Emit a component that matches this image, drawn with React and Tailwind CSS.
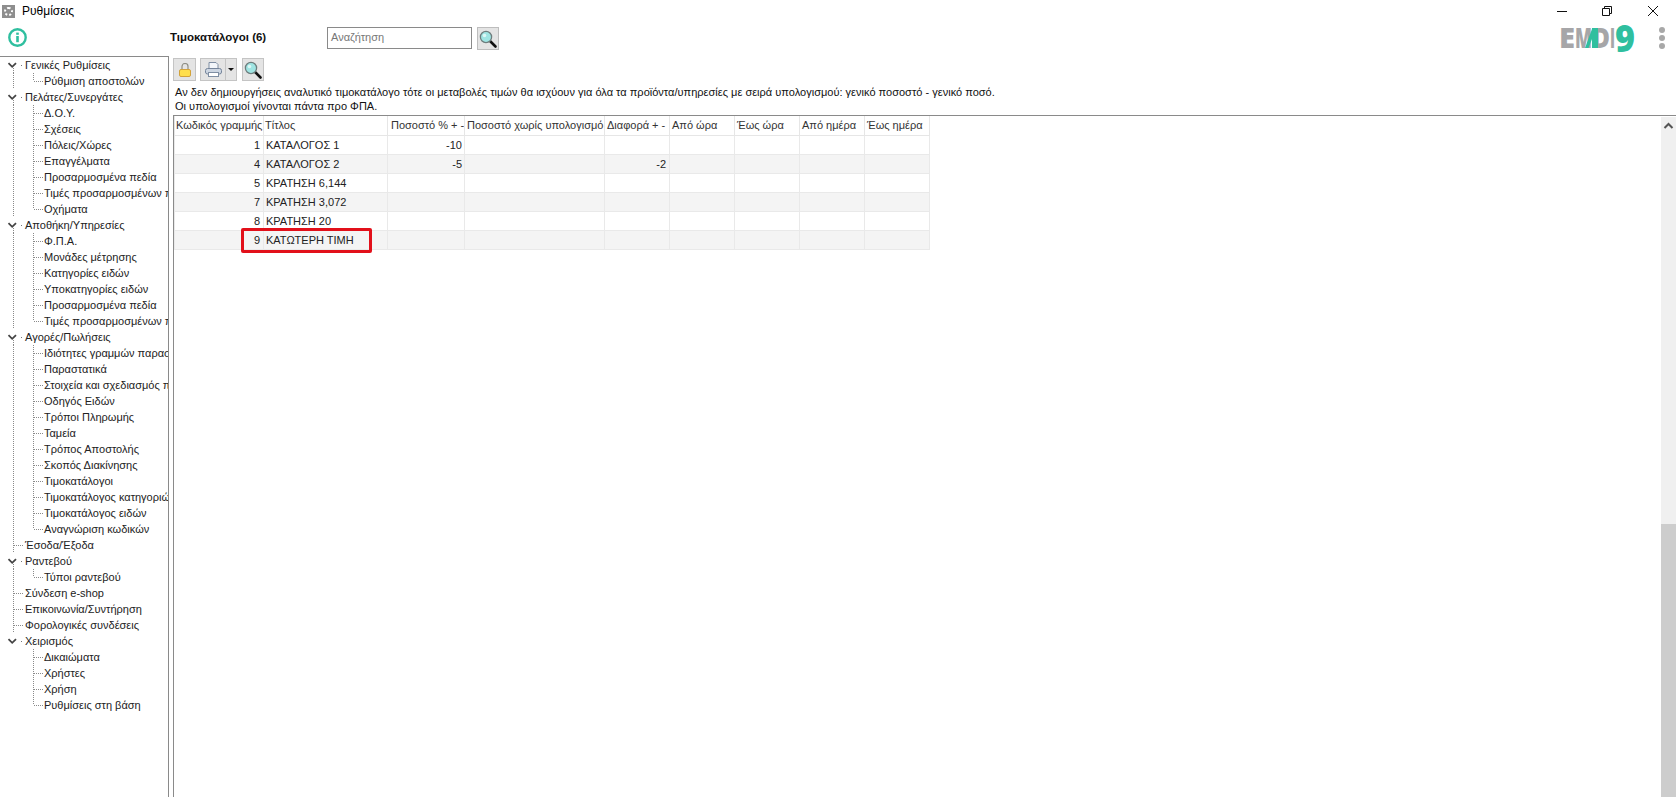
// App.jsx
const TREE = [
  { t: 'Γενικές Ρυθμίσεις', k: 'parent' },
  { t: 'Ρύθμιση αποστολών', k: 'child', last: true },
  { t: 'Πελάτες/Συνεργάτες', k: 'parent' },
  { t: 'Δ.Ο.Υ.', k: 'child' },
  { t: 'Σχέσεις', k: 'child' },
  { t: 'Πόλεις/Χώρες', k: 'child' },
  { t: 'Επαγγέλματα', k: 'child' },
  { t: 'Προσαρμοσμένα πεδία', k: 'child' },
  { t: 'Τιμές προσαρμοσμένων πεδίων', k: 'child' },
  { t: 'Οχήματα', k: 'child', last: true },
  { t: 'Αποθήκη/Υπηρεσίες', k: 'parent' },
  { t: 'Φ.Π.Α.', k: 'child' },
  { t: 'Μονάδες μέτρησης', k: 'child' },
  { t: 'Κατηγορίες ειδών', k: 'child' },
  { t: 'Υποκατηγορίες ειδών', k: 'child' },
  { t: 'Προσαρμοσμένα πεδία', k: 'child' },
  { t: 'Τιμές προσαρμοσμένων πεδίων', k: 'child', last: true },
  { t: 'Αγορές/Πωλήσεις', k: 'parent' },
  { t: 'Ιδιότητες γραμμών παραστατικών', k: 'child' },
  { t: 'Παραστατικά', k: 'child' },
  { t: 'Στοιχεία και σχεδιασμός παραστατικών', k: 'child' },
  { t: 'Οδηγός Ειδών', k: 'child' },
  { t: 'Τρόποι Πληρωμής', k: 'child' },
  { t: 'Ταμεία', k: 'child' },
  { t: 'Τρόπος Αποστολής', k: 'child' },
  { t: 'Σκοπός Διακίνησης', k: 'child' },
  { t: 'Τιμοκατάλογοι', k: 'child' },
  { t: 'Τιμοκατάλογος κατηγοριών', k: 'child' },
  { t: 'Τιμοκατάλογος ειδών', k: 'child' },
  { t: 'Αναγνώριση κωδικών', k: 'child', last: true },
  { t: 'Έσοδα/Έξοδα', k: 'leaf' },
  { t: 'Ραντεβού', k: 'parent' },
  { t: 'Τύποι ραντεβού', k: 'child', last: true },
  { t: 'Σύνδεση e-shop', k: 'leaf' },
  { t: 'Επικοινωνία/Συντήρηση', k: 'leaf' },
  { t: 'Φορολογικές συνδέσεις', k: 'leaf' },
  { t: 'Χειρισμός', k: 'parent', end: true },
  { t: 'Δικαιώματα', k: 'child', noRoot: true },
  { t: 'Χρήστες', k: 'child', noRoot: true },
  { t: 'Χρήση', k: 'child', noRoot: true },
  { t: 'Ρυθμίσεις στη βάση', k: 'child', last: true, noRoot: true },
];

const COLS = [
  { t: 'Κωδικός γραμμής', c: 'w-[89px] pl-px' },
  { t: 'Τίτλος', c: 'w-[124px] pl-px' },
  { t: 'Ποσοστό % + -', c: 'w-[77px] pl-[3px]' },
  { t: 'Ποσοστό χωρίς υπολογισμό', c: 'w-[140px] pl-[2px]' },
  { t: 'Διαφορά + -', c: 'w-[65px] pl-[2px]' },
  { t: 'Από ώρα', c: 'w-[65px] pl-[2px]' },
  { t: 'Έως ώρα', c: 'w-[65px] pl-[2px]' },
  { t: 'Από ημέρα', c: 'w-[65px] pl-[2px]' },
  { t: 'Έως ημέρα', c: 'w-[65px] pl-[2px]' },
];

const ROWS = [
  [1, 'ΚΑΤΑΛΟΓΟΣ 1', '-10', ''],
  [4, 'ΚΑΤΑΛΟΓΟΣ 2', '-5', '-2'],
  [5, 'ΚΡΑΤΗΣΗ 6,144', '', ''],
  [7, 'ΚΡΑΤΗΣΗ 3,072', '', ''],
  [8, 'ΚΡΑΤΗΣΗ 20', '', ''],
  [9, 'ΚΑΤΩΤΕΡΗ ΤΙΜΗ', '', ''],
];

function TreeGuide({ k, last, noRoot, end }) {
  const dots = { stroke: '#8a8a8a', strokeWidth: 1, strokeDasharray: '1 1' };
  return (
    <svg width="44" height="16" className="shrink-0">
      {k === 'parent' && (
        <>
          {!end && <line x1="13.5" y1="11" x2="13.5" y2="16" {...dots} />}
          <path d="M8.5 6.2 L12.2 9.8 L16 6.2" fill="none" stroke="#444" strokeWidth="1.8" />
          <rect x="21" y="8" width="1" height="1" fill="#777" />
        </>
      )}
      {k === 'leaf' && (
        <>
          <line x1="13.5" y1="0" x2="13.5" y2="16" {...dots} />
          <line x1="14" y1="8.5" x2="24" y2="8.5" {...dots} />
        </>
      )}
      {k === 'child' && (
        <>
          {!noRoot && <line x1="13.5" y1="0" x2="13.5" y2="16" {...dots} />}
          <line x1="33.5" y1="0" x2="33.5" y2={last ? 8 : 16} {...dots} />
          <line x1="34" y1="8.5" x2="43" y2="8.5" {...dots} />
        </>
      )}
    </svg>
  );
}

function Magnifier() {
  return (
    <svg width="20" height="20" viewBox="0 0 20 20">
      <path d="M11.5 11.5 L17.5 17.5" stroke="#111" strokeWidth="2.6" strokeLinecap="round" />
      <circle cx="8" cy="8" r="5.6" fill="#9fe5e3" stroke="#6d7d7d" strokeWidth="1.3" />
      <circle cx="6.5" cy="6.5" r="1.8" fill="#dcf7f6" />
    </svg>
  );
}

function Lock() {
  return (
    <svg width="12" height="14" viewBox="0 0 12 14">
      <path d="M3 7 V3.5 a3 3 0 0 1 6 0 V7" fill="none" stroke="#8f8f86" strokeWidth="1.2" />
      <rect x="0.5" y="6.5" width="11" height="7" rx="1.5" fill="#ffdf4d" stroke="#d2a23a" />
    </svg>
  );
}

function Printer() {
  return (
    <svg width="17" height="15" viewBox="0 0 17 15">
      <path d="M4 7 V0.5 H11 L13 2.5 V7" fill="#f3f6fa" stroke="#7f8ea3" />
      <rect x="0.5" y="6.5" width="16" height="5.5" rx="2" fill="#cdd6e2" stroke="#75849a" />
      <rect x="3.5" y="10.5" width="10" height="4" fill="#fff" stroke="#7f8ea3" />
    </svg>
  );
}

function Logo() {
  const type = { fontFamily: "'Open Sans', sans-serif", fontWeight: 800, lengthAdjust: 'spacingAndGlyphs' };
  return (
    <svg width="76" height="28" viewBox="0 0 76 28" className="-mt-[2px] shrink-0">
      <text x="0" y="23" fontSize="28" fill="#a6a6a8" textLength="16" {...type}>E</text>
      <text x="16" y="23" fontSize="28" fill="#a6a6a8" textLength="17" {...type}>M</text>
      <text x="33" y="23" fontSize="28" fill="#a6a6a8" textLength="18" {...type}>D</text>
      <text x="51" y="23" fontSize="28" fill="#a6a6a8" textLength="5" {...type}>I</text>
      <rect x="33" y="3" width="6" height="20" fill="#2fbf9f" />
      <path d="M26 23 L33 4 V14 L29.5 23 Z" fill="#2fbf9f" />
      <text x="56" y="27" fontSize="37" fill="#2fbf9f" textLength="20" {...type}>9</text>
    </svg>
  );
}

export default function App() {
  return (
    <div className="flex h-screen w-full flex-col overflow-hidden bg-white text-[11px] leading-none text-[#222] [font-family:'Liberation_Sans',Arial,sans-serif]">
      {/* Title bar */}
      <div className="flex h-[27px] shrink-0 items-center pb-[5px]">
        <div className="ml-[2px] flex h-[13px] w-[13px] items-center justify-center bg-[#8e8e8e]">
          <div className="h-[9px] w-[9px] rounded-full border-2 border-dotted border-white" />
        </div>
        <span className="ml-[7px] text-[12px] text-black">Ρυθμίσεις</span>
        <div className="ml-auto flex items-center">
          <svg width="10" height="10" viewBox="0 0 10 10" className="mr-[35px]">
            <line x1="0" y1="5.5" x2="10" y2="5.5" stroke="#111" />
          </svg>
          <svg width="10" height="10" viewBox="0 0 10 10" className="mr-[36px]">
            <path d="M0.5 2.5 H7.5 V9.5 H0.5 Z M2.5 2.5 V0.5 H9.5 V7.5 H7.5" fill="none" stroke="#111" />
          </svg>
          <svg width="10" height="10" viewBox="0 0 10 10" className="mr-[18px]">
            <path d="M0 0 L10 10 M10 0 L0 10" stroke="#111" />
          </svg>
        </div>
      </div>

      <div className="flex min-h-0 flex-1">
        {/* Left column */}
        <div className="flex w-[169px] shrink-0 flex-col">
          <div className="flex h-[29px] shrink-0 items-start pl-[8px] pt-[1px]">
            <svg width="19" height="19" viewBox="0 0 19 19">
              <circle cx="9.5" cy="9.5" r="8.2" fill="none" stroke="#2fbf9f" strokeWidth="2.4" />
              <rect x="8.2" y="8" width="2.6" height="6.2" fill="#2fbf9f" />
              <rect x="8.2" y="4.6" width="2.6" height="2.2" fill="#2fbf9f" />
            </svg>
          </div>
          <div className="min-h-0 flex-1 overflow-hidden border-t border-r border-[#8a8a8a]">
            {TREE.map((n, i) => (
              <div key={i} className="flex h-4 items-center">
                <TreeGuide {...n} />
                <span className={`${n.k === 'child' ? '' : '-ml-[19px]'} whitespace-nowrap`}>{n.t}</span>
              </div>
            ))}
          </div>
        </div>

        {/* Right column */}
        <div className="flex min-w-0 flex-1 flex-col">
          <div className="flex h-[31px] shrink-0 items-start pl-[1px]">
            <span className="mt-[5px] w-[157px] text-[11.5px] font-bold text-[#111]">Τιμοκατάλογοι (6)</span>
            <div className="flex h-[22px] w-[145px] items-center border border-[#8a8a8a] pb-px pl-[3px] text-[#777]">Αναζήτηση</div>
            <div className="ml-[5px] flex h-[23px] w-[22px] items-center justify-center border border-[#bdbdbd] bg-[#e4e4e4]">
              <Magnifier />
            </div>
            <div className="ml-auto">
              <Logo />
            </div>
            <div className="ml-[24px] mr-[11px] flex flex-col gap-[2px]">
              <div className="h-[6px] w-[6px] rounded-full bg-[#a8a8a8]" />
              <div className="h-[6px] w-[6px] rounded-full bg-[#a8a8a8]" />
              <div className="h-[6px] w-[6px] rounded-full bg-[#a8a8a8]" />
            </div>
          </div>

          <div className="flex h-[23px] shrink-0 items-stretch gap-[5px] pl-[4px]">
            <div className="flex w-[23px] items-center justify-center border border-[#c4c4c4] bg-[#e4e4e4]">
              <Lock />
            </div>
            <div className="-ml-px flex w-[37px] items-stretch border border-[#c4c4c4] bg-[#e4e4e4]">
              <div className="flex w-[25px] items-center justify-center border-r border-[#c4c4c4]">
                <Printer />
              </div>
              <div className="flex flex-1 items-center justify-center">
                <div className="h-0 w-0 border-x-[3px] border-t-[3px] border-x-transparent border-t-[#111]" />
              </div>
            </div>
            <div className="flex w-[22px] items-center justify-center border border-[#c4c4c4] bg-[#e4e4e4]">
              <Magnifier />
            </div>
          </div>

          <div className="flex h-[34px] shrink-0 flex-col justify-end gap-[3px] pb-[3px] pl-[6px] text-[11px] tracking-[0.015px] text-[#111]">
            <p className="leading-[11px]">Αν δεν δημιουργήσεις αναλυτικό τιμοκατάλογο τότε οι μεταβολές τιμών θα ισχύουν για όλα τα προϊόντα/υπηρεσίες με σειρά υπολογισμού: γενικό ποσοστό - γενικό ποσό.</p>
            <p className="leading-[11px]">Οι υπολογισμοί γίνονται πάντα προ ΦΠΑ.</p>
          </div>

          {/* Table panel */}
          <div className="ml-[4px] flex min-h-0 flex-1 border-t border-l border-[#8a8a8a]">
            <div className="min-w-0 flex-1">
              <div className="relative w-fit">
                <table className="w-[755px] table-fixed border-collapse">
                  <thead>
                    <tr className="h-[19px]">
                      {COLS.map((c) => (
                        <th key={c.t} className={`${c.c} overflow-hidden whitespace-nowrap border border-t-0 border-[#e6e6e6] text-left font-normal text-[#333]`}>
                          {c.t}
                        </th>
                      ))}
                    </tr>
                  </thead>
                  <tbody>
                    {ROWS.map((r, i) => (
                      <tr key={r[0]} className={`h-[19px] ${i % 2 ? 'bg-[#f4f4f4]' : 'bg-white'}`}>
                        <td className="border border-[#e9e9e9] pr-[3px] pt-px text-right">{r[0]}</td>
                        <td className="border border-[#e9e9e9] pl-[2px] pt-px">{r[1]}</td>
                        <td className="border border-[#e9e9e9] pr-[2px] pt-px text-right">{r[2]}</td>
                        <td className="border border-[#e9e9e9]" />
                        <td className="border border-[#e9e9e9] pr-[3px] pt-px text-right">{r[3]}</td>
                        <td className="border border-[#e9e9e9]" />
                        <td className="border border-[#e9e9e9]" />
                        <td className="border border-[#e9e9e9]" />
                        <td className="border border-[#e9e9e9]" />
                      </tr>
                    ))}
                  </tbody>
                </table>
                {/* red highlight over the last row */}
                <div className="absolute left-[67px] top-[112px] h-[25px] w-[131px] rounded-[2px] border-[3px] border-[#e2101a]" />
              </div>
            </div>
            {/* Scrollbar */}
            <div className="mt-px flex w-[15px] shrink-0 flex-col bg-[#f0f0f0]">
              <svg width="15" height="15" viewBox="0 0 15 15" className="mt-[1px]">
                <path d="M3.5 10 L7.5 6 L11.5 10" fill="none" stroke="#555" strokeWidth="2" />
              </svg>
              <div className="mt-auto h-[273px] bg-[#cdcdcd]" />
            </div>
          </div>
        </div>
      </div>
    </div>
  );
}
